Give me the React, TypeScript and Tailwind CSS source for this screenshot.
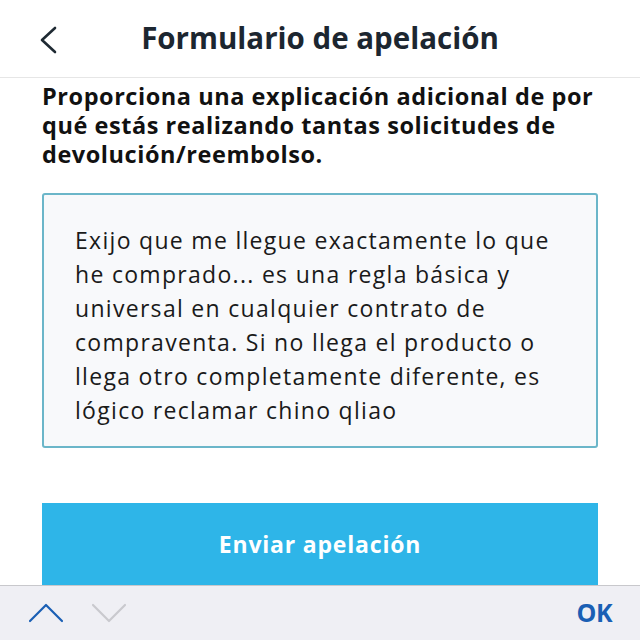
export default function App() {
  return (
    <main className="relative h-[640px] w-[640px] overflow-hidden bg-white font-['Open_Sans',sans-serif]">
      {/* HEADER */}
      <header className="relative flex h-[78px] items-center justify-center border-b border-[#e6e6e6]">
        <svg className="absolute left-[38px] top-[26px]" width="20" height="28" viewBox="0 0 20 28" fill="none">
          <path d="M17 2 L4 14 L17 26" stroke="#1f2a33" strokeWidth="2.6" strokeLinecap="round" strokeLinejoin="round" />
        </svg>
        <h1 className="text-[29.5px] font-bold text-[#1c2630]">Formulario de apelación</h1>
      </header>

      {/* FORM */}
      <section className="px-[42px] pt-[4px]">
        <p className="whitespace-nowrap text-[23.5px] font-bold leading-[29px] tracking-[0.55px] text-[#111]">
          Proporciona una explicación adicional de por
          <br />
          qué estás realizando tantas solicitudes de
          <br />
          devolución/reembolso.
        </p>
        <div className="mt-[24px] h-[255px] rounded-[3px] border-2 border-[#6bb6c9] bg-[#f8f9fb] px-[31px] pt-[28px]">
          <p className="whitespace-nowrap text-[23px] leading-[34px] tracking-[1.3px] text-[#1a1a1a]">
            Exijo que me llegue exactamente lo que
            <br />
            he comprado... es una regla básica y
            <br />
            universal en cualquier contrato de
            <br />
            compraventa. Si no llega el producto o
            <br />
            llega otro completamente diferente, es
            <br />
            lógico reclamar chino qliao
          </p>
        </div>
        <button className="mt-[55px] flex h-[90px] w-full items-start justify-center bg-[#2eb5e8] pt-[24px] text-[23px] font-bold tracking-[0.8px] text-white">
          Enviar apelación
        </button>
      </section>

      {/* KEYBOARD TOOLBAR */}
      <div className="absolute bottom-0 left-0 flex h-[55px] w-full items-center border-t border-[#c8c8cc] bg-[#efeff4] px-[28px]">
        <svg width="36" height="20" viewBox="0 0 36 20" fill="none">
          <path d="M2 18 L18 2 L34 18" stroke="#1a5fb4" strokeWidth="2.2" strokeLinecap="round" strokeLinejoin="round" />
        </svg>
        <svg className="ml-[27px]" width="36" height="20" viewBox="0 0 36 20" fill="none">
          <path d="M2 2 L18 18 L34 2" stroke="#c9c9ce" strokeWidth="2.2" strokeLinecap="round" strokeLinejoin="round" />
        </svg>
        <span className="ml-auto text-[25px] font-bold tracking-[-0.5px] text-[#1a5fb4]">OK</span>
      </div>
    </main>
  );
}
